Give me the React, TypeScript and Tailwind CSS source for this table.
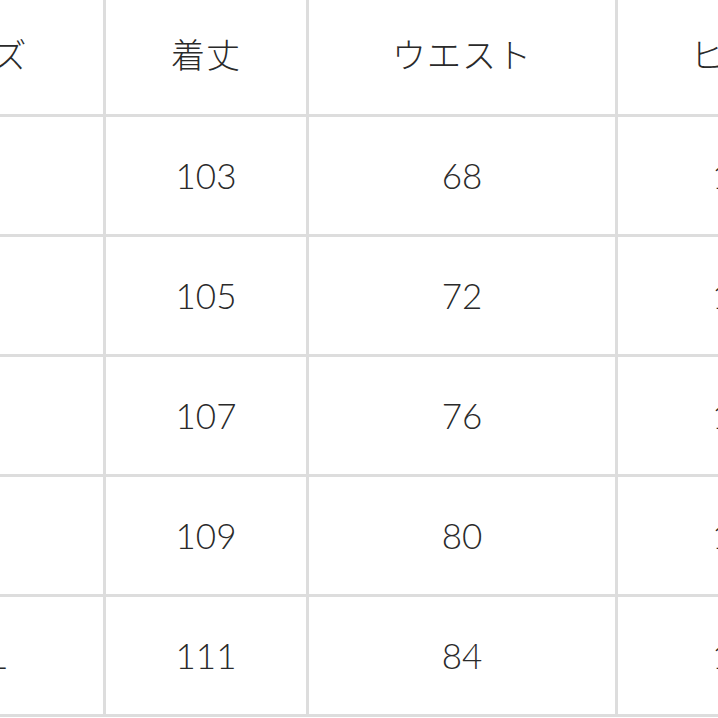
import React from 'react';

const HEADERS = ['サイズ', '着丈', 'ウエスト', 'ヒップ'];

const ROWS = [
  ['S', '103', '68', '100'],
  ['M', '105', '72', '104'],
  ['L', '107', '76', '108'],
  ['XL', '109', '80', '112'],
  ['XXL', '111', '84', '116'],
];

const cell =
  'h-[120px] flex items-center justify-center border-r-[3px] border-b-[3px] border-[#dddddd] text-[#2a2a2a]';

export default function App() {
  return (
    <div className="w-[718px] h-[718px] overflow-hidden bg-white">
      <div className="grid grid-cols-[258px_203px_309px_252px] w-max ml-[-152px] mt-[-3px]">
        {/* header row */}
        {HEADERS.map(h => (
          <div
            key={h}
            className={`${cell} pb-[5px] text-[34px] font-light tracking-[1px] [font-family:'Noto_Sans_CJK_JP',sans-serif]`}
          >
            {h}
          </div>
        ))}
        {/* size rows */}
        {ROWS.map(row =>
          row.map((v, i) => (
            <div
              key={row[0] + i}
              className={`${cell} text-[35px] font-light [font-family:Lato,'Noto_Sans',sans-serif]`}
            >
              {v}
            </div>
          )),
        )}
      </div>
    </div>
  );
}
